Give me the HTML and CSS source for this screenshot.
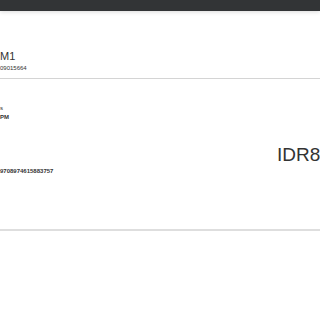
FILE: index.html
```html
<!DOCTYPE html>
<html lang="en">
<head>
    <meta charset="UTF-8">
    <meta name="viewport" content="width=device-width, initial-scale=1.0">
    <title>Receipt</title>
    <link rel="stylesheet" href="styles.css">
</head>
<body>
    <div class="topbar"></div>
    <div class="page">
        <div class="account">
            <div class="account-name">M1</div>
            <div class="account-no">09015664</div>
        </div>
        <div class="detail">
            <div class="detail-left">
                <div class="label">s</div>
                <div class="value">PM</div>
                <div class="ref">9708974615883757</div>
            </div>
            <div class="amount">IDR850.000</div>
        </div>
    </div>
</body>
</html>
```

FILE: styles.css
```css
body {
    font-family: "Liberation Sans", Arial, sans-serif;
    margin: 0;
    background-color: #fff;
    color: #333;
    overflow: hidden;
}

.topbar {
    height: 11px;
    background-color: #323436;
    box-shadow: 0 1px 4px rgba(0, 0, 0, 0.15);
}

.page {
    overflow: hidden;
}

.account {
    padding-top: 39px;
    padding-bottom: 6px;
    border-bottom: 1px solid #d4d4d4;
}

.account-name {
    font-size: 11px;
    line-height: 13px;
}

.account-no {
    font-size: 6px;
    line-height: 8px;
    margin-top: 1px;
}

.detail {
    display: grid;
    grid-template-columns: 277px 200px;
    height: 150px;
    border-bottom: 2px solid #dedede;
}

.detail-left {
    padding-top: 25px;
}

.label {
    font-size: 6px;
    line-height: 8px;
}

.value {
    font-size: 6px;
    line-height: 8px;
    font-weight: bold;
    margin-top: 1px;
}

.ref {
    font-size: 6px;
    line-height: 8px;
    font-weight: bold;
    margin-top: 46px;
}

.amount {
    font-size: 19px;
    line-height: 22px;
    margin-top: 65px;
    white-space: nowrap;
}
```
